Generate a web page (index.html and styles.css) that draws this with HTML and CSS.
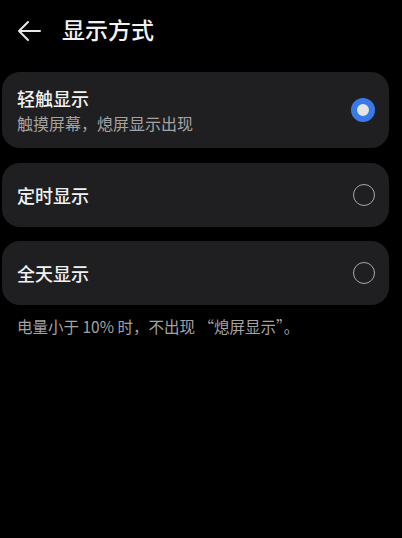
FILE: index.html
```html
<!DOCTYPE html>
<html lang="zh">
<head>
    <meta charset="UTF-8">
    <meta name="viewport" content="width=device-width, initial-scale=1.0">
    <title>显示方式</title>
    <link rel="stylesheet" href="styles.css">
</head>
<body>
    <div class="header">
        <svg class="back" width="26" height="22" viewBox="0 0 26 22">
            <path d="M24 11 H3 M12 2 L3 11 L12 20" fill="none" stroke="#e8e8e8" stroke-width="2" stroke-linecap="round" stroke-linejoin="round"/>
        </svg>
        <h1>显示方式</h1>
    </div>

    <div class="list">
        <div class="card card-tall">
            <div class="text">
                <div class="title">轻触显示</div>
                <div class="sub">触摸屏幕，熄屏显示出现</div>
            </div>
            <span class="radio checked"></span>
        </div>

        <div class="card">
            <div class="text">
                <div class="title">定时显示</div>
            </div>
            <span class="radio"></span>
        </div>

        <div class="card">
            <div class="text">
                <div class="title">全天显示</div>
            </div>
            <span class="radio"></span>
        </div>
    </div>

    <p class="note">电量小于 10% 时，不出现 “熄屏显示”。</p>
</body>
</html>
```

FILE: styles.css
```css
body {
    margin: 0;
    background-color: #000;
    color: #f0f0f0;
    font-family: "Noto Sans CJK SC", "Noto Sans", sans-serif;
}

.header {
    display: flex;
    align-items: center;
    height: 62px;
    padding-left: 16px;
}

.back {
    margin-right: 20px;
}

h1 {
    margin: 0 0 4px 0;
    font-size: 23px;
    font-weight: 500;
    color: #f2f2f2;
}

.list {
    display: flex;
    flex-direction: column;
    gap: 14px;
    margin-top: 10px;
    padding-left: 2px;
}

.card {
    display: flex;
    align-items: center;
    justify-content: space-between;
    width: 387px;
    height: 64px;
    padding: 0 14px 0 15px;
    box-sizing: border-box;
    background-color: #1f1f21;
    border-radius: 18px;
}

.card-tall {
    height: 76px;
    margin-bottom: 1px;
}

.title {
    font-size: 18px;
    font-weight: 500;
    line-height: 24px;
    color: #f2f2f2;
}

.sub {
    font-size: 16px;
    line-height: 22px;
    margin-top: 2px;
    color: #a3a3a3;
}

.radio {
    width: 22px;
    height: 22px;
    border: 1.5px solid #a8a8a8;
    border-radius: 50%;
    box-sizing: border-box;
}

.radio.checked {
    width: 24px;
    height: 24px;
    border: 6px solid #3a7ae8;
    background-color: #e4e4e4;
}

.note {
    margin: 10px 0 0 17px;
    font-size: 15.5px;
    line-height: 22px;
    color: #a3a3a3;
}
```
